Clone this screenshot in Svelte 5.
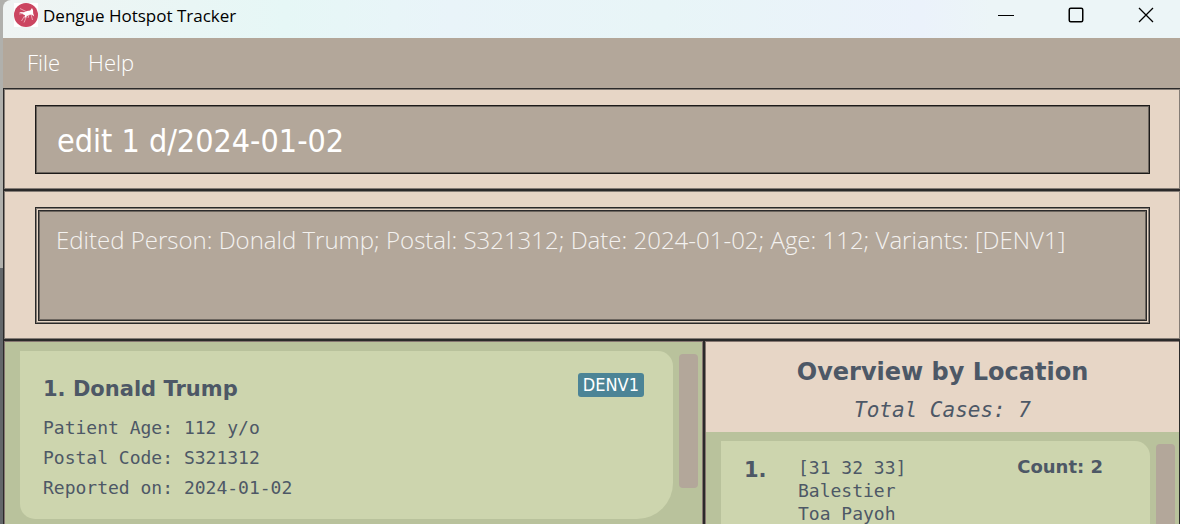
<script>
  const menus = ['File', 'Help'];
  const persons = [
    {
      name: 'Donald Trump',
      variants: ['DENV1'],
      details: ['Patient Age: 112 y/o', 'Postal Code: S321312', 'Reported on: 2024-01-02']
    }
  ];
  const locations = [
    { prefixes: '[31 32 33]', areas: ['Balestier', 'Toa Payoh'], count: 2 }
  ];
  const total = 7;
  let command = $state('edit 1 d/2024-01-02');
  let result =
    'Edited Person: Donald Trump; Postal: S321312; Date: 2024-01-02; Age: 112; Variants: [DENV1]';
</script>

<div class="window">
  <header class="titlebar">
    <svg class="logo" viewBox="0 0 24 24" aria-hidden="true">
      <rect width="24" height="24" fill="#fff" />
      <circle cx="12" cy="12" r="12" fill="#cb4560" />
      <path d="M5 9l5 .3 3-1.300 3.200-.5 1.800-2.500 1 2.200.2 3.300 1 3-2-1.500-2.500-.3-2.500 1.300-2.700 2.500.5-3.200-2.500-1.300z" fill="#fff" />
      <path d="M10.500 13l-3 5M13 12.500l-3 7M15 12l-1 3M17 11l1.500 6M6 5.500l6 3M5 11l4-.5" fill="none" stroke="#f0bcc6" stroke-width=".8" />
    </svg>
    <h1>Dengue Hotspot Tracker</h1>
    <div class="controls">
      <button aria-label="Minimize"><svg viewBox="0 0 16 16"><path d="M0 8.500h16" /></svg></button>
      <button aria-label="Maximize"><svg viewBox="0 0 16 16"><rect x="1.250" y="1.250" width="13.500" height="13.500" rx="1.500" stroke-width="1.500" /></svg></button>
      <button aria-label="Close"><svg viewBox="0 0 16 16"><path d="M1 1l14 14M15 1L1 15" stroke-width="1.300" /></svg></button>
    </div>
  </header>

  <nav class="menubar">
    {#each menus as menu}
      <button>{menu}</button>
    {/each}
  </nav>

  <section class="pane">
    <input class="command" aria-label="Command" bind:value={command} spellcheck="false" />
  </section>

  <section class="pane">
    <div class="result-frame">
      <div class="result" role="status">{result}</div>
    </div>
  </section>

  <main class="columns">
    <section class="column people">
      <div class="list">
        <div class="cards">
          {#each persons as person, i}
            <article class="card person">
              <div class="heading">
                <h2>{i + 1}. {person.name}</h2>
                {#each person.variants as variant}
                  <span class="tag">{variant}</span>
                {/each}
              </div>
              {#each person.details as detail}
                <p>{detail}</p>
              {/each}
            </article>
          {/each}
        </div>
        <div class="thumb"></div>
      </div>
    </section>

    <section class="column overview">
      <div class="summary">
        <h2>Overview by Location</h2>
        <p>Total Cases: {total}</p>
      </div>
      <div class="list">
        <div class="cards">
          {#each locations as location, i}
            <article class="card location">
              <h3>{i + 1}.</h3>
              <div class="areas">
                <p>{location.prefixes}</p>
                {#each location.areas as area}
                  <p>{area}</p>
                {/each}
              </div>
              <strong>Count: {location.count}</strong>
            </article>
          {/each}
        </div>
        <div class="thumb"></div>
      </div>
    </section>
  </main>
</div>

<style>
  :global(body) {
    margin: 0;
  }
  .window,
  .window * {
    box-sizing: border-box;
  }
  .window {
    display: flex;
    flex-direction: column;
    height: 100vh;
    overflow: hidden;
    padding-left: 3px;
    background: linear-gradient(#b0b0ac 0 268px, #63676a 268px);
    color: #4d5866;
    font-family: 'DejaVu Sans', sans-serif;
  }
  h1,
  h2,
  h3,
  p {
    margin: 0;
  }
  button {
    border: 0;
    padding: 0;
    background: none;
  }
  .titlebar {
    display: flex;
    flex: none;
    align-items: center;
    height: 38px;
    padding: 0 0 8px 11px;
    border-top-left-radius: 8px;
    background: linear-gradient(90deg, #eff4f3, #e6f7f6 24%, #e9f4f9 38%, #e8f5f7 56%, #ebf2fb 78%, #ecf5f7 84%);
  }
  .logo {
    width: 24px;
    height: 24px;
    margin-right: 5px;
  }
  h1 {
    flex: 1;
    padding-top: 2px;
    color: #000;
    font: 400 17px/26px 'Open Sans', sans-serif;
  }
  .controls {
    display: flex;
    margin-right: -1px;
  }
  .controls button {
    display: grid;
    place-items: center;
    width: 70px;
    height: 30px;
  }
  .controls svg {
    width: 16px;
    height: 16px;
    fill: none;
    stroke: #000;
  }
  .menubar {
    display: flex;
    flex: none;
    align-items: flex-start;
    gap: 28px;
    height: 50px;
    padding: 0 24px;
    background: #b3a79a;
  }
  .menubar button {
    color: #fff;
    font: 300 22px/48px 'Open Sans', sans-serif;
  }
  .pane {
    flex: none;
    padding: 16px 30px 15px 31px;
    border: 1px solid #2b2a2a;
    border-right: 0;
    background: #e7d6c6;
    box-shadow: inset 0 0 0 1px #857d76;
  }
  .command {
    display: block;
    width: 100%;
    height: 69px;
    padding: 2px 21px 0;
    border: 1px solid #1d1b1a;
    border-radius: 0;
    outline: 0;
    background: #b3a79a;
    box-shadow: inset 0 0 0 1px #6d665f;
    color: #fff;
    font: 32px 'DejaVu Sans Condensed', 'DejaVu Sans', sans-serif;
  }
  .result-frame {
    padding: 2px;
    border: 1px solid #2b2a2a;
    box-shadow: inset 0 0 0 1px #857d76;
  }
  .result {
    height: 111px;
    padding: 11px 17px;
    border: 1px solid #2b2a2a;
    background: #b3a79a;
    box-shadow: inset 0 0 0 1px #6d665f;
    color: #f4f2f0;
    font: 300 24px/36px 'Open Sans', sans-serif;
  }
  .columns {
    display: grid;
    flex: 1;
    grid-template-columns: 701fr 476fr;
    min-height: 0;
  }
  .column {
    display: flex;
    flex-direction: column;
    min-width: 0;
    min-height: 0;
    padding: 1px 1px 0;
    border: 1px solid #2b2a2a;
    border-bottom: 0;
    background: #857670;
  }
  .overview {
    padding-right: 0;
  }
  .list {
    display: flex;
    flex: 1;
    min-height: 0;
    padding: 9px 4px 0 15px;
    gap: 6px;
    overflow: hidden;
    background: #b9c29c;
  }
  .cards {
    flex: 1;
    min-width: 0;
  }
  .card {
    border-radius: 0 15px 36px 15px;
    background: #cdd5ae;
  }
  .thumb {
    flex: none;
    width: 19px;
    height: 134px;
    margin-top: 3px;
    border-radius: 4px;
    background: #b3a79a;
  }
  .person {
    height: 168px;
    padding: 22px 29px 0 23px;
  }
  .heading {
    display: flex;
    align-items: flex-start;
    justify-content: space-between;
    margin-bottom: 8px;
  }
  .heading h2 {
    font-size: 21px;
    line-height: 32px;
  }
  .tag {
    padding: 0 5px;
    border-radius: 3px;
    background: #4c8496;
    color: #fff;
    font: 18px/24px 'DejaVu Sans Condensed', 'DejaVu Sans', sans-serif;
  }
  .card p {
    font: 18px/30px 'DejaVu Sans Mono', monospace;
  }
  .summary {
    height: 90px;
    padding-top: 12px;
    background: #e7d6c6;
    text-align: center;
  }
  .summary h2 {
    font-size: 24px;
    line-height: 36px;
  }
  .summary p {
    margin-top: 4px;
    font: italic 21px/32px 'DejaVu Sans Mono', monospace;
  }
  .card.location {
    display: grid;
    grid-template-columns: 54px 1fr auto;
    height: 168px;
    padding: 15px 47px 0 23px;
  }
  .location h3 {
    font-size: 21px;
    line-height: 28px;
  }
  .card.location p {
    line-height: 23px;
  }
  .location strong {
    font-size: 18px;
    line-height: 22px;
  }
</style>
